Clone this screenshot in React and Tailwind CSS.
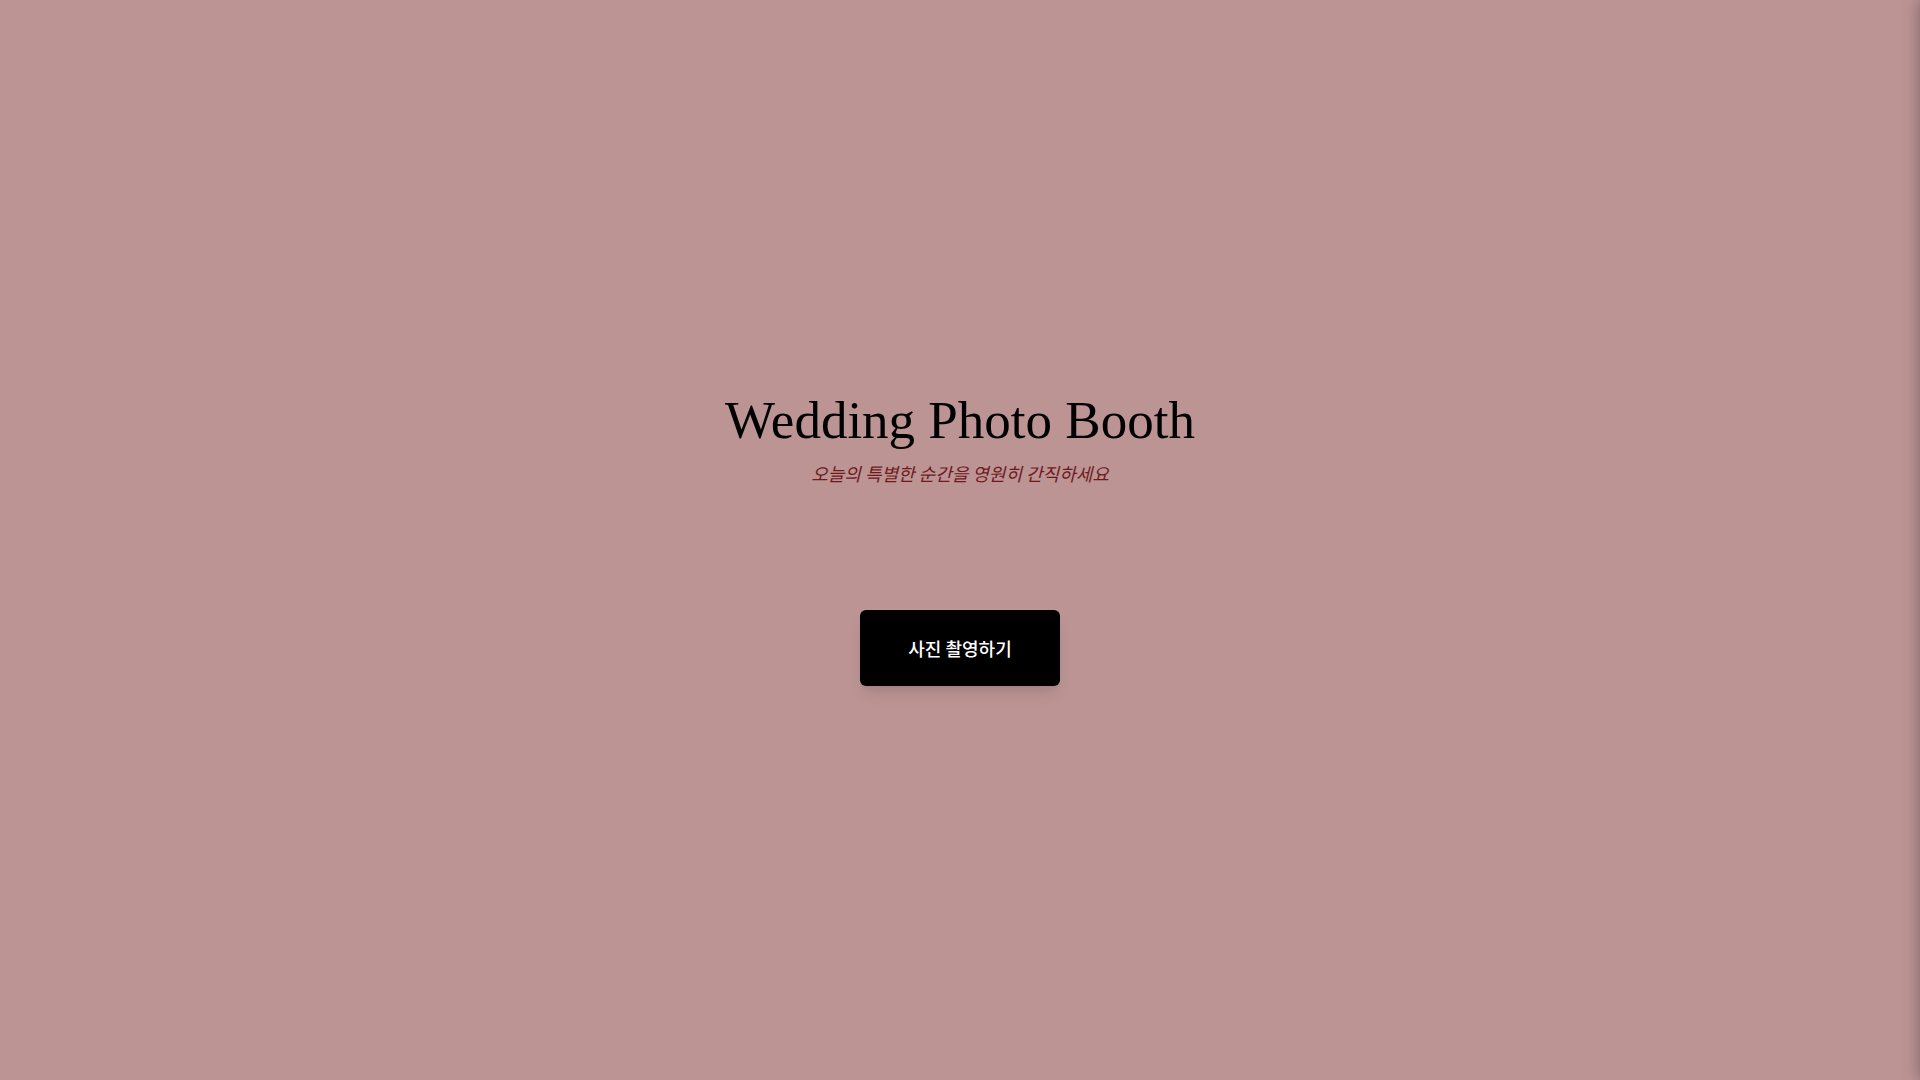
export default function App() {
  return (
    <div className="relative min-h-screen w-full overflow-hidden bg-[#bc9494] flex flex-col items-center justify-center">
      <div className="flex flex-col items-center">
        <h1 className="text-[53px] leading-none text-black font-['Liberation_Serif',serif]">
          Wedding Photo Booth
        </h1>
        <p className="mt-[13px] text-[18px] italic text-[#6e1a1c] font-['Noto_Sans_CJK_KR',sans-serif]">
          오늘의 특별한 순간을 영원히 간직하세요
        </p>
        <button className="mt-[123px] px-12 py-6 rounded-md bg-black text-white text-[18px] leading-7 font-medium shadow-lg font-['Noto_Sans_CJK_KR',sans-serif]">
          사진 촬영하기
        </button>
      </div>

      {/* off-canvas drawer, only its shadow shows */}
      <div className="fixed top-0 left-full h-full w-80 bg-white shadow-[0_0_16px_rgba(0,0,0,0.35)]"></div>
    </div>
  );
}
